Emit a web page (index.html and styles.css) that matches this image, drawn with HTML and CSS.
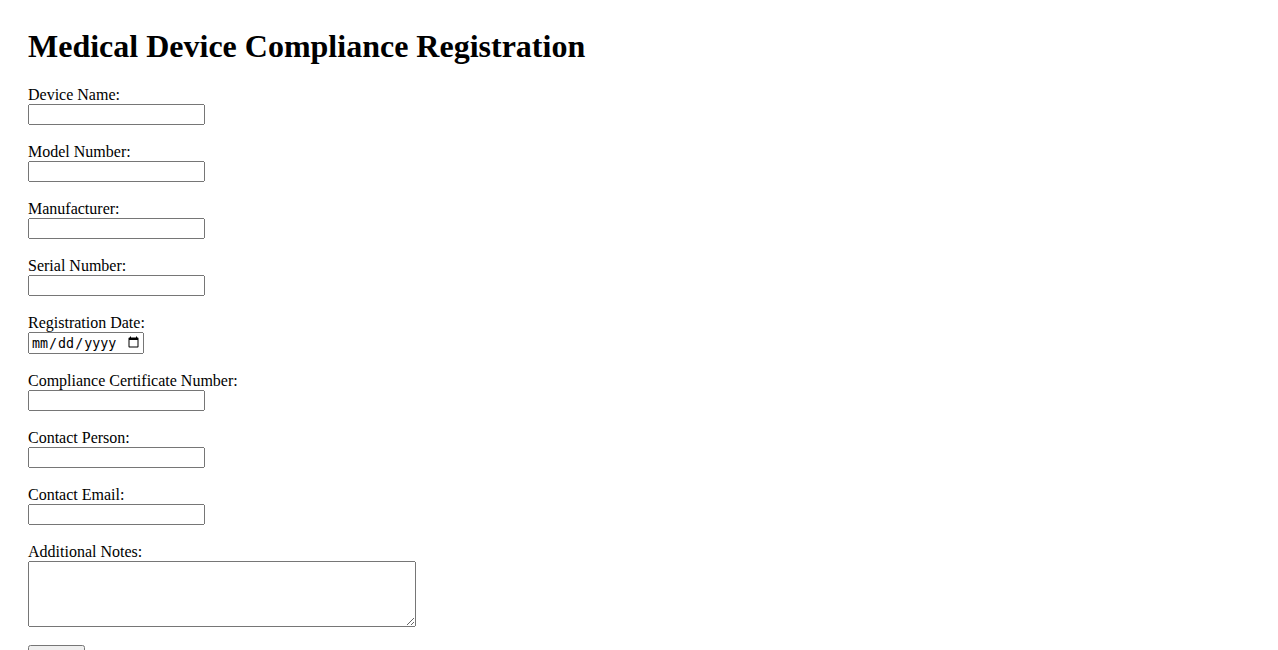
FILE: index.html
```html
<!DOCTYPE html>
<html>

<head>
    <title>Medical Device Compliance Registration</title>
    <link rel="stylesheet" href="styles.css">
</head>

<body>

    <h1>Medical Device Compliance Registration</h1>

    <form id="registration">
        <label for="deviceName">Device Name:</label><br>
        <input type="text" id="deviceName" name="deviceName" class="field"><br><br>

        <label for="modelNumber">Model Number:</label><br>
        <input type="text" id="modelNumber" name="modelNumber" class="field"><br><br>

        <label for="manufacturer">Manufacturer:</label><br>
        <input type="text" id="manufacturer" name="manufacturer" class="field"><br><br>

        <label for="serialNumber">Serial Number:</label><br>
        <input type="text" id="serialNumber" name="serialNumber" class="field"><br><br>

        <label for="registrationDate">Registration Date:</label><br>
        <input type="date" id="registrationDate" name="registrationDate" class="date-field"><br><br>

        <label for="certificateNumber">Compliance Certificate Number:</label><br>
        <input type="text" id="certificateNumber" name="certificateNumber" class="field"><br><br>

        <label for="contactPerson">Contact Person:</label><br>
        <input type="text" id="contactPerson" name="contactPerson" class="field"><br><br>

        <label for="contactEmail">Contact Email:</label><br>
        <input type="email" id="contactEmail" name="contactEmail" class="field"><br><br>

        <label for="notes">Additional Notes:</label><br>
        <textarea id="notes" name="notes" rows="4" cols="50" class="notes"></textarea><br><br>

        <input type="submit" value="Submit" class="submit-btn">
    </form>

</body>

</html>
```

FILE: styles.css
```css
body {
    font-family: "Liberation Serif", "Times New Roman", serif;
    margin: 8px;
    padding: 20px;
}

h1 {
    margin-top: 0;
}

.field {
    box-sizing: border-box;
    width: 177px;
}

.date-field {
    box-sizing: border-box;
    width: 116px;
}

.notes {
    box-sizing: border-box;
    width: 388px;
    height: 66px;
    vertical-align: top;
}

.submit-btn {
    box-sizing: border-box;
    width: 57px;
}
```
